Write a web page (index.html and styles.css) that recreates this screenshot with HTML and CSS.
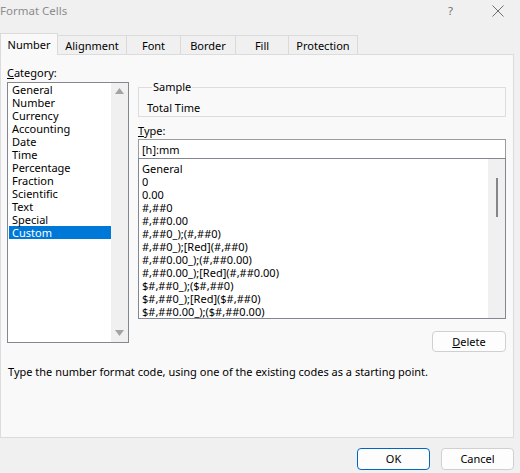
FILE: index.html
```html
<!DOCTYPE html>
<html lang="en">
<head>
<meta charset="utf-8">
<title>Format Cells</title>
<link rel="stylesheet" href="styles.css">
</head>
<body>
<div class="dialog">
  <div class="titlebar">
    <span class="title">Format Cells</span>
    <span class="help">?</span>
    <span class="close">
      <svg width="12" height="12" viewBox="0 0 12 12"><path d="M0.5 0.5L11.5 11.5M11.5 0.5L0.5 11.5" stroke="#6e6e6e" stroke-width="1" fill="none"/></svg>
    </span>
  </div>
  <div class="tabs">
    <div class="tab tab-number active">Number</div>
    <div class="tab tab-alignment">Alignment</div>
    <div class="tab tab-font">Font</div>
    <div class="tab tab-border">Border</div>
    <div class="tab tab-fill">Fill</div>
    <div class="tab tab-protection">Protection</div>
  </div>
  <div class="panel">
    <div class="columns">
      <div class="left">
        <div class="label"><u>C</u>ategory:</div>
        <div class="catlist">
          <ul class="items">
            <li>General</li>
            <li>Number</li>
            <li>Currency</li>
            <li>Accounting</li>
            <li>Date</li>
            <li>Time</li>
            <li>Percentage</li>
            <li>Fraction</li>
            <li>Scientific</li>
            <li>Text</li>
            <li>Special</li>
            <li class="selected">Custom</li>
          </ul>
          <div class="vscroll">
            <svg class="arrow" width="9" height="6" viewBox="0 0 9 6"><path d="M4.5 0L9 6H0Z" fill="#a3a3a3"/></svg>
            <svg class="arrow" width="9" height="6" viewBox="0 0 9 6"><path d="M0 0H9L4.5 6Z" fill="#a3a3a3"/></svg>
          </div>
        </div>
      </div>
      <div class="right">
        <fieldset class="sample">
          <legend>Sample</legend>
          <div class="sample-value">Total Time</div>
        </fieldset>
        <div class="label type-label"><u>T</u>ype:</div>
        <div class="typebox">[h]:mm</div>
        <div class="fmtlist">
          <ul class="items fmt-items">
            <li>General</li>
            <li>0</li>
            <li>0.00</li>
            <li>#,##0</li>
            <li>#,##0.00</li>
            <li>#,##0_);(#,##0)</li>
            <li>#,##0_);[Red](#,##0)</li>
            <li>#,##0.00_);(#,##0.00)</li>
            <li>#,##0.00_);[Red](#,##0.00)</li>
            <li>$#,##0_);($#,##0)</li>
            <li>$#,##0_);[Red]($#,##0)</li>
            <li>$#,##0.00_);($#,##0.00)</li>
          </ul>
          <div class="vscroll thin">
            <div class="thumb"></div>
          </div>
        </div>
        <div class="delete-row">
          <button class="btn delete"><u>D</u>elete</button>
        </div>
      </div>
    </div>
    <p class="hint">Type the number format code, using one of the existing codes as a starting point.</p>
  </div>
  <div class="footer">
    <button class="btn ok">OK</button>
    <button class="btn cancel">Cancel</button>
  </div>
</div>
</body>
</html>
```
FILE: styles.css
```css
* { box-sizing: border-box; }
html, body {
  margin: 0;
  padding: 0;
  background: #f0f0f0;
}
body {
  font-family: "Noto Sans", "Open Sans", sans-serif;
  font-size: 11px;
  color: #000;
  width: 520px;
  height: 473px;
  overflow: hidden;
}
.dialog { width: 520px; }

.titlebar {
  height: 33px;
  display: flex;
  align-items: flex-start;
  padding-top: 3px;
  color: #8c8c8c;
  font-size: 11.5px;
}
.title { flex: 1; line-height: 16px; }
.help { width: 44px; line-height: 16px; color: #707070; }
.close { width: 28px; padding-top: 2px; }

.tabs {
  display: flex;
  align-items: flex-end;
  height: 21px;
  position: relative;
  z-index: 2;
}
.tab {
  height: 19px;
  border-top: 1px solid #dadada;
  border-right: 1px solid #dadada;
  background: #f0f0f0;
  text-align: center;
  line-height: 19px;
}
.tab.active {
  height: 22px;
  margin-bottom: -1px;
  background: #f9f9f9;
  border-left: 1px solid #dadada;
  line-height: 22px;
}
.tab-number { width: 58px; }
.tab-alignment { width: 69px; }
.tab-font { width: 54px; }
.tab-border { width: 55px; }
.tab-fill { width: 53px; }
.tab-protection { width: 69px; }

.panel {
  width: 514px;
  height: 384px;
  background: #f9f9f9;
  border: 1px solid #dcdcdc;
  padding: 10px 6px 0 6px;
}
.columns {
  display: grid;
  grid-template-columns: 122px 368px;
  column-gap: 9px;
}
.label { line-height: 15px; height: 15px; }
.left .label { margin-bottom: 2px; }

.items {
  list-style: none;
  margin: 0;
  padding: 0;
}
.items li {
  height: 13px;
  line-height: 13px;
  padding-left: 3px;
  white-space: nowrap;
}

.catlist {
  height: 261px;
  border: 1px solid #828790;
  background: #fff;
  display: flex;
  padding: 0 0 0 1px;
}
.catlist .items { flex: 1; padding-top: 0; }
.catlist li.selected { background: #0078d7; color: #fff; }
.vscroll {
  width: 17px;
  background: #f0f0f0;
  display: flex;
  flex-direction: column;
  justify-content: space-between;
  align-items: center;
  padding: 5px 0 6px;
}
.arrow { display: block; }

.right { padding-top: 15px; }
.sample {
  margin: 0;
  border: 1px solid #dcdcdc;
  padding: 7px 8px 0;
  height: 37px;
}
.sample legend {
  padding: 0 1px;
  margin-left: 5px;
  line-height: 14px;
}
.sample-value { line-height: 14px; }
.type-label { margin-top: 6px; height: 16px; line-height: 16px; }
.typebox {
  height: 20px;
  border: 1px solid #9c9c9c;
  background: #fff;
  line-height: 19px;
  padding-left: 3px;
  margin-bottom: -1px;
}
.fmtlist {
  height: 161px;
  border: 1px solid #828790;
  background: #fff;
  display: flex;
  overflow: hidden;
}
.fmt-items { flex: 1; padding-top: 3px; overflow: hidden; }
.fmt-items li { padding-left: 3px; }
.vscroll.thin {
  justify-content: flex-start;
  padding: 19px 0 0;
}
.thumb {
  width: 2px;
  height: 39px;
  background: #858585;
  margin-left: 1px;
}

.delete-row {
  display: flex;
  justify-content: flex-end;
  padding-top: 12px;
}
.btn {
  font-family: inherit;
  font-size: 11px;
  color: #000;
  background: #fdfdfd;
  border: 1px solid #d0d0d0;
  border-radius: 4px;
  height: 21px;
  width: 74px;
  padding: 0;
  line-height: 18px;
}

.hint {
  margin: 12px 0 0 1px;
  line-height: 15px;
}

.footer {
  display: flex;
  justify-content: flex-end;
  gap: 11px;
  padding: 10px 6px 0 0;
}
.footer .btn { height: 22px; width: 73px; }
.ok { border-color: #0067c0; }
```
